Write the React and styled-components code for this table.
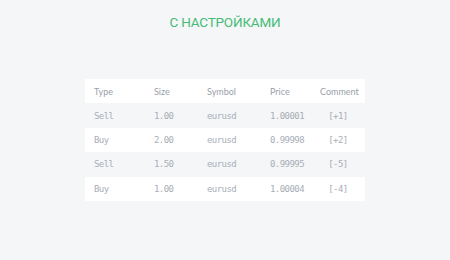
import React from 'react'
import styled, { createGlobalStyle } from 'styled-components'

const GlobalStyle = createGlobalStyle`
  html, body {
    margin: 0;
    padding: 0;
    background: #f5f6f8;
    font-family: Lato, 'Noto Sans', sans-serif;
  }
`

const Page = styled.div`
  width: 450px;
  height: 260px;
  display: flex;
  flex-direction: column;
  align-items: center;
`

const Title = styled.h1`
  margin: 13px 0 0;
  font-family: Roboto, sans-serif;
  font-size: 13.5px;
  line-height: 18px;
  font-weight: 400;
  letter-spacing: -0.2px;
  color: #45bb76;
  text-transform: uppercase;
`

const Table = styled.div`
  margin-top: 48px;
  width: 280px;
  display: flex;
  flex-direction: column;
`

const Row = styled.div`
  display: grid;
  grid-template-columns: 60px 53px 63px 50px 1fr;
  align-items: center;
  height: 24.4px;
  padding: 0 9px;
  background: ${({ $striped }) => ($striped ? '#f5f6f8' : '#ffffff')};
`

const HeadCell = styled.div`
  font-family: Lato, 'Noto Sans', sans-serif;
  font-size: 9px;
  color: #9aa0a9;
  text-align: ${({ $center }) => ($center ? 'center' : 'left')};
  white-space: nowrap;
`

const Cell = styled.div`
  font-family: 'DejaVu Sans Mono', monospace;
  font-size: 9px;
  letter-spacing: -0.55px;
  color: #a9aeb6;
  text-align: ${({ $center }) => ($center ? 'center' : 'left')};
  white-space: nowrap;
`

const trades = [
  { type: 'Sell', size: '1.00', symbol: 'eurusd', price: '1.00001', comment: '[+1]' },
  { type: 'Buy', size: '2.00', symbol: 'eurusd', price: '0.99998', comment: '[+2]' },
  { type: 'Sell', size: '1.50', symbol: 'eurusd', price: '0.99995', comment: '[-5]' },
  { type: 'Buy', size: '1.00', symbol: 'eurusd', price: '1.00004', comment: '[-4]' },
]

export default function App() {
  return (
    <>
      <GlobalStyle />
      <Page>
        <Title>С настройками</Title>
        <Table>
          <Row>
            <HeadCell>Type</HeadCell>
            <HeadCell>Size</HeadCell>
            <HeadCell>Symbol</HeadCell>
            <HeadCell>Price</HeadCell>
            <HeadCell $center>Comment</HeadCell>
          </Row>
          {trades.map((t, i) => (
            <Row key={i} $striped={i % 2 === 0}>
              <Cell>{t.type}</Cell>
              <Cell>{t.size}</Cell>
              <Cell>{t.symbol}</Cell>
              <Cell>{t.price}</Cell>
              <Cell $center>{t.comment}</Cell>
            </Row>
          ))}
        </Table>
      </Page>
    </>
  )
}
